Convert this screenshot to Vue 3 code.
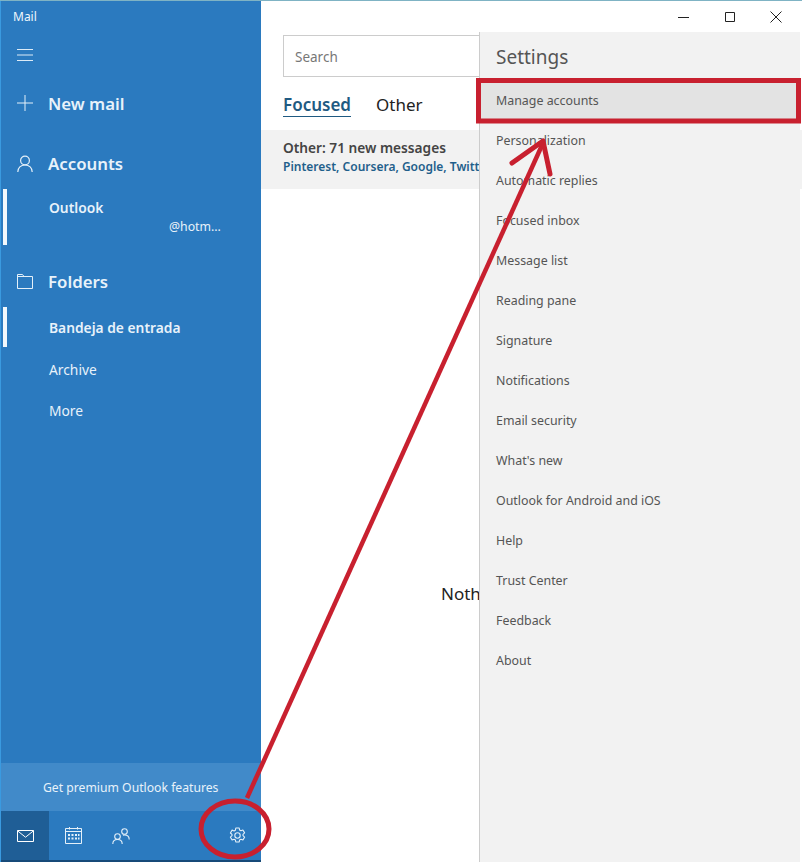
<template>
  <div class="window">
    <aside class="sidebar">
      <div class="app-title">Mail</div>
      <div class="burger">
        <svg width="17" height="14" viewBox="0 0 17 14"><path d="M0 1.500h16M0 7h16M0 12.500h16" stroke="#dcebf7" fill="none" /></svg>
      </div>
      <div class="nav-row new-mail">
        <svg width="16" height="16" viewBox="0 0 16 16"><path d="M8 0v16M0 8h16" stroke="#e4f0f9" fill="none" /></svg>
        <span>New mail</span>
      </div>
      <div class="nav-row accounts">
        <svg width="16" height="17" viewBox="0 0 16 17" fill="none" stroke="#e4f0f9" stroke-width="1.200"><circle cx="8" cy="5.500" r="4.400" /><path d="M.8 17c0-4.200 3-7 7.200-7s7.200 2.800 7.200 7" /></svg>
        <span>Accounts</span>
      </div>
      <div class="sub-item account active">
        <div class="account-name">Outlook</div>
        <div class="account-mail">@hotm...</div>
      </div>
      <div class="nav-row folders">
        <svg width="16" height="15" viewBox="0 0 16 15" fill="none" stroke="#e4f0f9"><path d="M.5 14.500V.5h5l1.500 2h8.500v12zM.5 2.500h6.500" /></svg>
        <span>Folders</span>
      </div>
      <div class="sub-item folder active strong">Bandeja de entrada</div>
      <div class="sub-item folder">Archive</div>
      <div class="sub-item folder">More</div>

      <div class="premium">Get premium Outlook features</div>
      <div class="bottom-bar">
        <div class="tab current">
          <svg width="17" height="12" viewBox="0 0 17 12" fill="none" stroke="#fff"><path d="M.5.500h16v11H.5zM.5.800l8 6.400 8-6.400" /></svg>
        </div>
        <div class="tab">
          <svg width="17" height="17" viewBox="0 0 17 17" fill="none" stroke="#e4f0f9"><path d="M.5 1.500h16v15H.5zM.5 4.500h16M4.500 0v2.500M12.500 0v2.500" /><path d="M3 7h2v2H3zM6.500 7h2v2h-2zM10 7h2v2h-2zM13 7h1.500v2H13zM3 10.500h2v2H3zM6.500 10.500h2v2h-2zM10 10.500h2v2h-2zM13 10.500h1.500v2H13z" fill="#e4f0f9" stroke="none" /></svg>
        </div>
        <div class="tab">
          <svg width="18" height="16" viewBox="0 0 18 16" fill="none" stroke="#e4f0f9" stroke-width="1.100"><circle cx="5.500" cy="8.500" r="2.800" /><path d="M.8 16c0-2.800 2-4.500 4.700-4.500s4.700 1.700 4.700 4.500" /><circle cx="12.500" cy="3.500" r="2.800" /><path d="M11 7.300c.5-.2 1-.3 1.500-.3 2.700 0 4.700 1.700 4.700 4.500" /></svg>
        </div>
        <div class="tab gear">
          <svg width="17" height="17" viewBox="0 0 17 17" fill="none" stroke="#e4f0f9" stroke-width="1.100" stroke-linejoin="round"><circle cx="8.500" cy="8.500" r="2.700" /><path d="M6.800 1h3.400l.4 2.100 1.300.7 2-.8 1.700 2.900-1.600 1.400v1.400l1.600 1.400-1.700 2.900-2-.8-1.300.7-.4 2.100H6.800l-.4-2.100-1.300-.7-2 .8-1.700-2.900 1.600-1.400V7.400L1.400 6l1.700-2.900 2 .8 1.300-.7z" /></svg>
        </div>
      </div>
    </aside>

    <main class="content">
      <div class="search">Search</div>
      <div class="tabs">
        <span class="tab-focused">Focused</span>
        <span class="tab-other">Other</span>
      </div>
      <div class="notice">
        <div class="notice-title">Other: 71 new messages</div>
        <div class="notice-senders">Pinterest, Coursera, Google, Twitt</div>
      </div>
      <div class="empty">Noth</div>
    </main>

    <section class="settings">
      <div class="caption">
        <svg width="12" height="12" viewBox="0 0 12 12"><path d="M0 6.500h11" stroke="#222" fill="none" /></svg>
        <svg width="12" height="12" viewBox="0 0 12 12"><path d="M1.500 1.500h9v9h-9z" stroke="#222" fill="none" /></svg>
        <svg width="12" height="12" viewBox="0 0 12 12"><path d="M.5.500l11 11M11.500.500l-11 11" stroke="#222" fill="none" /></svg>
      </div>
      <div class="panel">
        <h2>Settings</h2>
        <div v-for="(item, i) in settingsItems" :key="item" class="panel-item" :class="{ hovered: i === 0 }">{{ item }}</div>
      </div>
    </section>

    <svg class="annotation" width="802" height="862" viewBox="0 0 802 862" fill="none" stroke="#c8202f">
      <path d="M478.500 80.500h320v40.500h-320z" stroke-width="5" />
      <path d="M247 798L543 143" stroke-width="4.500" />
      <path d="M512 163L543 141L550 174" stroke-width="5" stroke-linecap="round" stroke-linejoin="round" />
      <ellipse cx="235" cy="829" rx="34" ry="28" stroke-width="5" />
    </svg>
  </div>
</template>

<script setup>
const settingsItems = [
  'Manage accounts',
  'Personalization',
  'Automatic replies',
  'Focused inbox',
  'Message list',
  'Reading pane',
  'Signature',
  'Notifications',
  'Email security',
  "What's new",
  'Outlook for Android and iOS',
  'Help',
  'Trust Center',
  'Feedback',
  'About'
]
</script>

<style>
html, body {
  margin: 0;
  background: #fff;
}
</style>

<style scoped>
.window {
  position: relative;
  display: flex;
  width: 802px;
  height: 862px;
  overflow: hidden;
  background: #fff;
  font-family: "Noto Sans", "Open Sans", sans-serif;
  box-sizing: border-box;
  border-top: 1px solid #7fb3c4;
}

.sidebar {
  display: flex;
  flex-direction: column;
  flex: none;
  width: 261px;
  height: 861px;
  background: #2b7abf;
  color: #e8f2fa;
  border-left: 1px solid #3a9ae0;
  box-sizing: border-box;
}

.app-title {
  height: 31px;
  line-height: 31px;
  padding-left: 12px;
  font-size: 12px;
  color: #eef6fc;
}

.burger {
  display: flex;
  align-items: center;
  height: 46px;
  padding-left: 16px;
  box-sizing: border-box;
}

.nav-row {
  display: flex;
  align-items: center;
  height: 46px;
  gap: 15px;
  padding-left: 16px;
  padding-bottom: 2px;
  font-size: 16.800px;
  font-weight: 600;
}

.new-mail {
  margin-top: 2px;
}

.accounts {
  margin-top: 12px;
}

.folders {
  margin-top: 12px;
}

.sub-item {
  position: relative;
  padding-left: 48px;
  font-size: 13.800px;
}

.sub-item.active::before {
  content: "";
  position: absolute;
  left: 2px;
  top: 1px;
  bottom: 1px;
  width: 4px;
  background: #f2f8fc;
}

.account {
  height: 58px;
  box-sizing: border-box;
  padding-top: 10px;
}

.account-name {
  font-weight: 600;
  line-height: 20px;
}

.account-mail {
  padding-left: 120px;
  font-size: 12.300px;
  line-height: 18px;
}

.folder {
  height: 41.500px;
  line-height: 43px;
}

.strong {
  font-weight: 600;
}

.premium {
  margin-top: auto;
  height: 48px;
  line-height: 49px;
  padding-left: 42px;
  font-size: 12.200px;
  background: #418ac9;
}

.bottom-bar {
  display: flex;
  flex: none;
  height: 49px;
  border-bottom: 2px solid #174a78;
}

.tab {
  display: flex;
  align-items: center;
  justify-content: center;
  width: 48px;
}

.tab.current {
  background: #1f5e96;
}

.gear {
  margin-left: auto;
}

.content {
  flex: 1;
  min-width: 0;
  padding-top: 34px;
  color: #222;
}

.search {
  width: 400px;
  height: 42px;
  margin-left: 22px;
  padding-left: 11px;
  line-height: 42px;
  font-size: 13.500px;
  color: #777;
  border: 1px solid #ccc;
  box-sizing: border-box;
}

.tabs {
  display: flex;
  align-items: flex-start;
  gap: 25px;
  height: 37px;
  margin-top: 16px;
  padding-left: 22px;
  font-size: 17px;
  line-height: 23px;
}

.tab-focused {
  font-weight: 600;
  color: #1f5a82;
  border-bottom: 1px solid #1f5a82;
  height: 23px;
}

.tab-other {
  color: #222;
}

.notice {
  height: 59px;
  padding: 8px 0 0 22px;
  box-sizing: border-box;
  background: #f2f2f2;
  white-space: nowrap;
}

.notice-title {
  font-size: 13.700px;
  font-weight: 600;
  line-height: 19px;
  color: #444;
}

.notice-senders {
  font-size: 12px;
  font-weight: 600;
  line-height: 19px;
  color: #1f5f8b;
}

.empty {
  margin-top: 393px;
  padding-left: 180px;
  font-size: 17px;
  line-height: 24px;
}

.settings {
  position: absolute;
  top: 0;
  right: 0;
  bottom: 0;
  width: 323px;
  display: flex;
  flex-direction: column;
}

.caption {
  display: flex;
  align-items: center;
  justify-content: flex-end;
  gap: 34px;
  height: 31px;
  padding-right: 20px;
  background: #fff;
}

.panel {
  flex: 1;
  background: #f2f2f2;
  border-left: 1px solid #ccc;
  margin-right: 2px;
}

.panel h2 {
  margin: 0;
  height: 48px;
  padding-left: 16px;
  font-size: 19px;
  font-weight: 400;
  line-height: 50px;
  color: #555;
}

.panel-item {
  height: 40px;
  padding-left: 16px;
  font-size: 12.400px;
  line-height: 42px;
  color: #555;
}

.panel-item.hovered {
  background: #e3e3e3;
}

.annotation {
  position: absolute;
  top: -1px;
  left: 0;
  pointer-events: none;
}
</style>
